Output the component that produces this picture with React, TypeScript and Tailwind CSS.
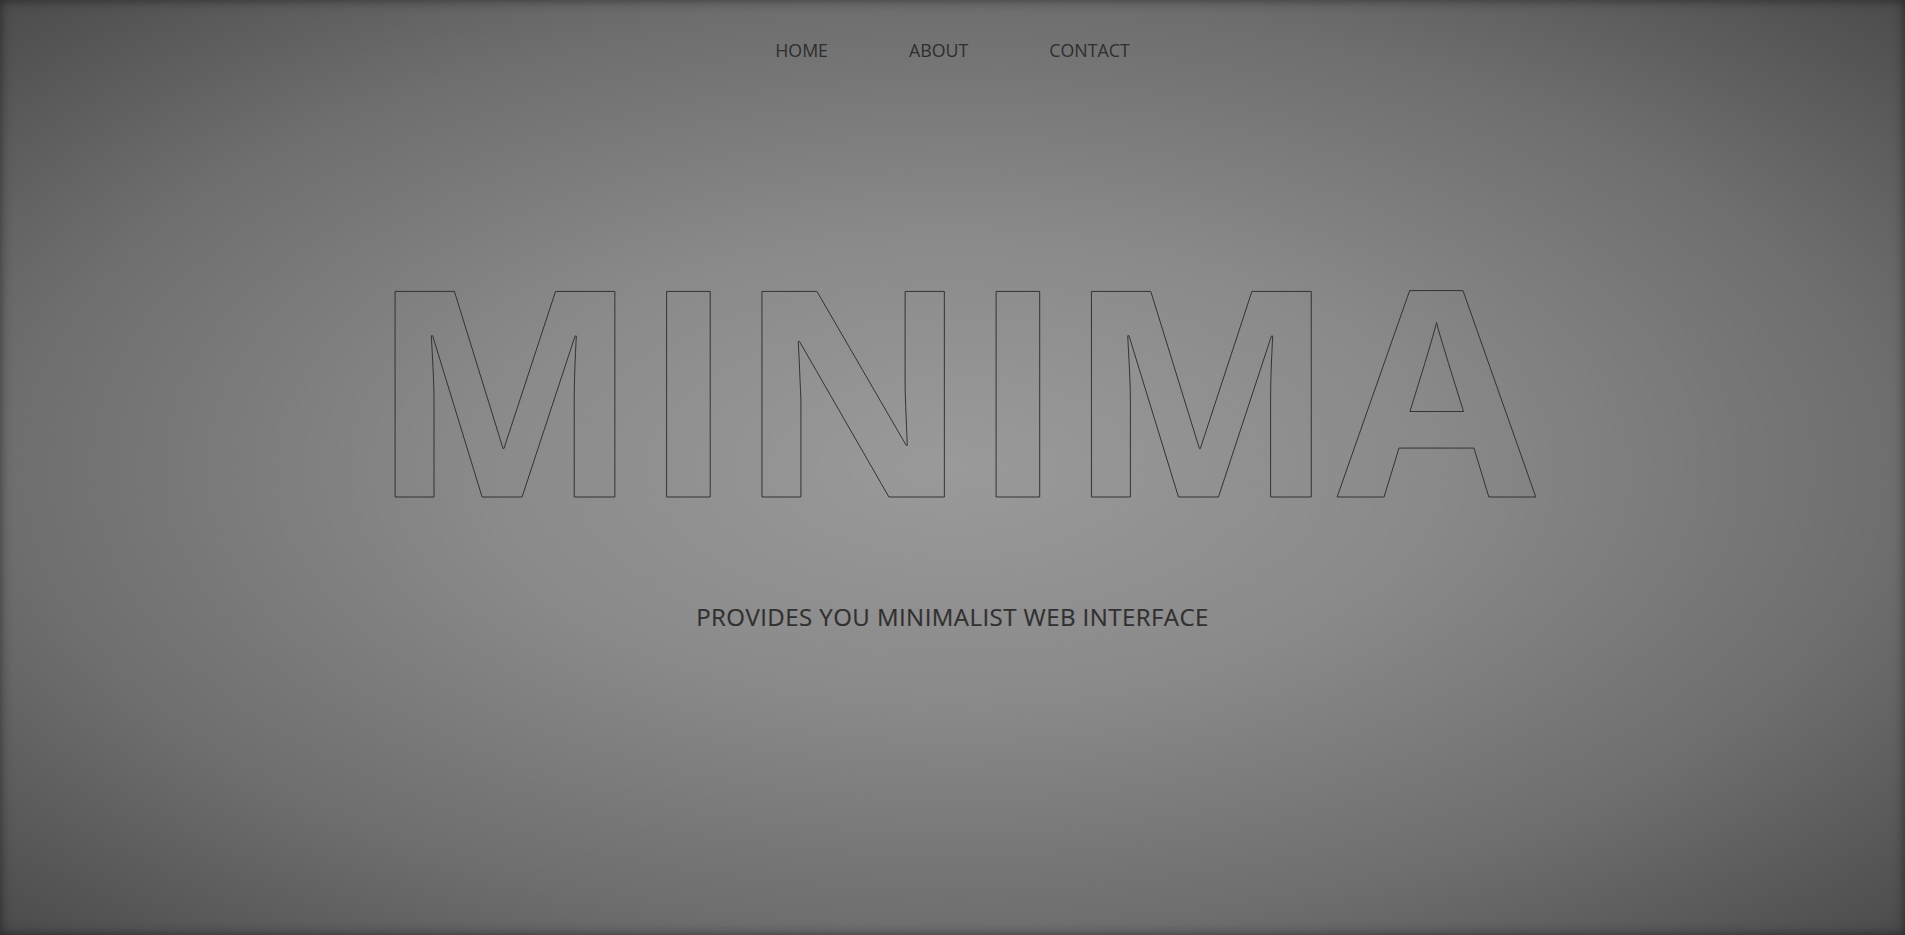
import React from 'react'

const links = ['HOME', 'ABOUT', 'CONTACT']

export default function App() {
	return (
		<div
			className="relative h-[935px] w-full overflow-hidden bg-[radial-gradient(ellipse_at_center,#9a9a9a_0%,#8a8a8a_35%,#6e6e6e_70%,#4b4b4b_100%)] shadow-[inset_0_0_12px_rgba(0,0,0,0.5)] font-['Open_Sans',sans-serif] text-[#333]"
		>
			{/* nav */}
			<nav className="flex justify-center gap-[81px] pt-[38px] text-[17.8px] leading-[24px]">
				{links.map(l => (
					<a key={l} className="text-[#2e2e2e]" href="#">
						{l}
					</a>
				))}
			</nav>
			{/* hero */}
			<div className="flex flex-col items-center">
				<h1 className="mt-[123px] text-[288px] font-bold leading-[400px] text-transparent [-webkit-text-stroke:1px_#333]">
					MINIMA
				</h1>
				<p className="mt-[16px] text-[24px] font-medium leading-[32px] tracking-[0.45px] text-[#303030] [-webkit-text-stroke:0.2px_#303030]">
					PROVIDES YOU MINIMALIST WEB INTERFACE
				</p>
			</div>
		</div>
	)
}
